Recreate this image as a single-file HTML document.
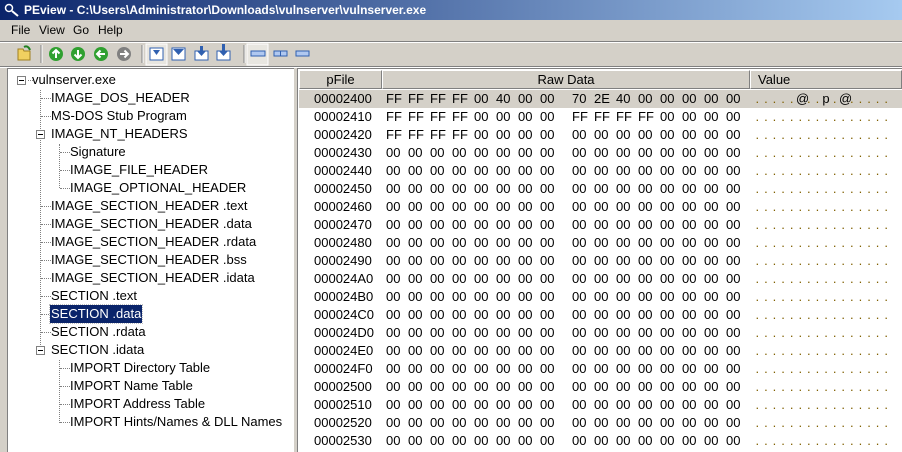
<!DOCTYPE html>
<html><head><style>
*{margin:0;padding:0;box-sizing:border-box}
body{width:902px;height:452px;background:#d4d0c8;font-family:"Liberation Sans",Arial,sans-serif;font-size:13px;position:relative;overflow:hidden;color:#000}
.title{position:absolute;left:0;top:0;width:902px;height:20px;background:linear-gradient(90deg,#0a246a,#a6caf0);color:#fff;font-weight:bold;font-size:12px;line-height:20px;padding-left:24px}
.menu{position:absolute;top:21px;left:0;height:19px;line-height:19px;font-size:12px}
.menu span{position:absolute}
.hl{position:absolute;left:0;width:902px;height:1px}
.left{position:absolute;left:7px;top:68px;width:287px;height:384px;background:#fff;border-left:1px solid #808080;border-top:1px solid #808080}
.right{position:absolute;left:297px;top:68px;width:605px;height:384px;background:#fff;border-left:1px solid #808080;border-top:1px solid #808080}
.t{position:absolute;white-space:nowrap;height:18px;line-height:18px}
.hdr{position:absolute;top:1px;height:19px;background:#d4d0c8;border-right:1px solid #808080;border-bottom:1px solid #808080;border-left:1px solid #fff;border-top:1px solid #fff;text-align:center;line-height:17px;font-size:13px}
.row{position:absolute;left:1px;width:604px;height:18px;line-height:18px}
.row .a{position:absolute;left:15px;color:#000}
.row .h{position:absolute;left:87px;color:#000;white-space:nowrap}
.row .h i{font-style:normal;display:inline-block;width:22px}
.row .h i.g{margin-left:10px}
.row .v{position:absolute;left:454px;white-space:nowrap;color:#806000}
.row .v i{font-style:normal;display:inline-block;width:8.6px;text-align:center}
.dv{position:absolute;border-left:1px dotted #808080;width:0}
.dh{position:absolute;border-top:1px dotted #808080;height:0}
.bx{position:absolute;width:9px;height:9px;border:1px solid #808080;background:#fff}
.bx:after{content:"";position:absolute;left:1px;top:3px;width:5px;height:1px;background:#000}
.ic{position:absolute;top:46px;width:14px;height:14px;border-radius:50%}
</style></head><body>
<div class="title">PEview - C:\Users\Administrator\Downloads\vulnserver\vulnserver.exe</div>
<svg style="position:absolute;left:4px;top:3px" width="16" height="14"><circle cx="5" cy="5" r="3.5" fill="none" stroke="#fff" stroke-width="1.5"/><line x1="8" y1="8" x2="14" y2="13" stroke="#fff" stroke-width="2"/></svg>
<div class="menu"><span style="left:11px">File</span><span style="left:39px">View</span><span style="left:73px">Go</span><span style="left:98px">Help</span></div>
<div class="hl" style="top:41px;background:#808080"></div><div class="hl" style="top:42px;background:#fff"></div>
<svg style="position:absolute;left:0;top:43px" width="320" height="24">
<path d="M18 6h5l1 2h6v9H18z" fill="#f0d060" stroke="#a08020"/><path d="M24 4q4-2 6 3" stroke="#208020" stroke-width="2" fill="none"/>
<line x1="41" y1="2" x2="41" y2="20" stroke="#808080"/><line x1="42" y1="2" x2="42" y2="20" stroke="#fff"/>
<circle cx="56" cy="11" r="7" fill="#30a030"/><path d="M56 15V7M52.5 10.5L56 7l3.5 3.5" stroke="#fff" stroke-width="2" fill="none"/>
<circle cx="78" cy="11" r="7" fill="#30a030"/><path d="M78 7v8M74.5 11.5L78 15l3.5-3.5" stroke="#fff" stroke-width="2" fill="none"/>
<circle cx="101" cy="11" r="7" fill="#30a030"/><path d="M105 11h-8M100.5 7.5L97 11l3.5 3.5" stroke="#fff" stroke-width="2" fill="none"/>
<circle cx="124" cy="11" r="7" fill="#808080"/><path d="M120 11h8M124.5 7.5L128 11l-3.5 3.5" stroke="#fff" stroke-width="2" fill="none"/>
<line x1="142" y1="2" x2="142" y2="20" stroke="#808080"/><line x1="143" y1="2" x2="143" y2="20" stroke="#fff"/>
<rect x="146" y="1" width="21" height="21" fill="#e8e6e0" stroke="#fff"/>
<rect x="150" y="5" width="13" height="12" fill="#fff" stroke="#3060b0"/><path d="M153 7h7l-3.5 5z" fill="#3060b0"/>
<rect x="172" y="5" width="13" height="12" fill="#fff" stroke="#3060b0"/><path d="M173 6h11l-5.5 6z" fill="#3060b0"/>
<rect x="195" y="8" width="13" height="9" fill="#fff" stroke="#3060b0"/><path d="M200 3h3v5h3l-4.5 5-4.5-5h3z" fill="#3060b0"/>
<rect x="217" y="8" width="13" height="9" fill="#fff" stroke="#3060b0"/><path d="M222 1h3v7h3l-4.5 5-4.5-5h3z" fill="#3060b0"/>
<line x1="244" y1="2" x2="244" y2="20" stroke="#808080"/><line x1="245" y1="2" x2="245" y2="20" stroke="#fff"/>
<rect x="247" y="1" width="21" height="21" fill="#e8e6e0" stroke="#fff"/>
<rect x="251" y="8" width="14" height="5" fill="#b0c8f0" stroke="#3060b0"/>
<rect x="274" y="8" width="13" height="5" fill="#b0c8f0" stroke="#3060b0"/><line x1="280.5" y1="8" x2="280.5" y2="13" stroke="#3060b0"/>
<rect x="296" y="8" width="13" height="5" fill="#b0c8f0" stroke="#3060b0"/>
</svg>
<div class="hl" style="top:66px;background:#808080"></div><div class="hl" style="top:67px;background:#fff"></div>

<div class="left">
<div class="dv" style="left:32px;top:21px;height:261px"></div>
<div class="dv" style="left:51px;top:75px;height:44px"></div>
<div class="dv" style="left:51px;top:291px;height:63px"></div>
<div class="dh" style="left:20px;top:11px;width:5px"></div>
<div class="dh" style="left:33px;top:29px;width:10px"></div>
<div class="dh" style="left:33px;top:47px;width:10px"></div>
<div class="dh" style="left:52px;top:83px;width:10px"></div>
<div class="dh" style="left:52px;top:101px;width:10px"></div>
<div class="dh" style="left:52px;top:119px;width:10px"></div>
<div class="dh" style="left:33px;top:137px;width:10px"></div>
<div class="dh" style="left:33px;top:155px;width:10px"></div>
<div class="dh" style="left:33px;top:173px;width:10px"></div>
<div class="dh" style="left:33px;top:191px;width:10px"></div>
<div class="dh" style="left:33px;top:209px;width:10px"></div>
<div class="dh" style="left:33px;top:227px;width:10px"></div>
<div class="dh" style="left:33px;top:245px;width:10px"></div>
<div class="dh" style="left:33px;top:263px;width:10px"></div>
<div class="dh" style="left:52px;top:299px;width:10px"></div>
<div class="dh" style="left:52px;top:317px;width:10px"></div>
<div class="dh" style="left:52px;top:335px;width:10px"></div>
<div class="dh" style="left:52px;top:353px;width:10px"></div>
<div class="bx" style="left:9px;top:7px"></div>
<div class="bx" style="left:28px;top:61px"></div>
<div class="bx" style="left:28px;top:277px"></div>
<div class="t" style="left:24px;top:2px">vulnserver.exe</div>
<div class="t" style="left:43px;top:20px">IMAGE_DOS_HEADER</div>
<div class="t" style="left:43px;top:38px">MS-DOS Stub Program</div>
<div class="t" style="left:43px;top:56px">IMAGE_NT_HEADERS</div>
<div class="t" style="left:62px;top:74px">Signature</div>
<div class="t" style="left:62px;top:92px">IMAGE_FILE_HEADER</div>
<div class="t" style="left:62px;top:110px">IMAGE_OPTIONAL_HEADER</div>
<div class="t" style="left:43px;top:128px">IMAGE_SECTION_HEADER .text</div>
<div class="t" style="left:43px;top:146px">IMAGE_SECTION_HEADER .data</div>
<div class="t" style="left:43px;top:164px">IMAGE_SECTION_HEADER .rdata</div>
<div class="t" style="left:43px;top:182px">IMAGE_SECTION_HEADER .bss</div>
<div class="t" style="left:43px;top:200px">IMAGE_SECTION_HEADER .idata</div>
<div class="t" style="left:43px;top:218px">SECTION .text</div>
<div class="t" style="left:42px;top:236px;background:#0a246a;color:#fff;padding:0 1px;outline:1px dotted #c0c0c0">SECTION .data</div>
<div class="t" style="left:43px;top:254px">SECTION .rdata</div>
<div class="t" style="left:43px;top:272px">SECTION .idata</div>
<div class="t" style="left:62px;top:290px">IMPORT Directory Table</div>
<div class="t" style="left:62px;top:308px">IMPORT Name Table</div>
<div class="t" style="left:62px;top:326px">IMPORT Address Table</div>
<div class="t" style="left:62px;top:344px">IMPORT Hints/Names &amp; DLL Names</div>
</div>

<div class="right">
<div class="hdr" style="left:1px;width:83px">pFile</div>
<div class="hdr" style="left:84px;width:368px">Raw Data</div>
<div class="hdr" style="left:452px;width:152px;text-align:left;padding-left:7px">Value</div>
<div class="row" style="top:21px;background:#d4d0c8"><span class="a">00002400</span><span class="h"><i>FF</i><i>FF</i><i>FF</i><i>FF</i><i>00</i><i>40</i><i>00</i><i>00</i><i class="g">70</i><i>2E</i><i>40</i><i>00</i><i>00</i><i>00</i><i>00</i><i>00</i></span><span class="v"><i>.</i><i>.</i><i>.</i><i>.</i><i>.</i><i style="color:#000">@</i><i>.</i><i>.</i><i style="color:#000">p</i><i>.</i><i style="color:#000">@</i><i>.</i><i>.</i><i>.</i><i>.</i><i>.</i></span></div>
<div class="row" style="top:39px"><span class="a">00002410</span><span class="h"><i>FF</i><i>FF</i><i>FF</i><i>FF</i><i>00</i><i>00</i><i>00</i><i>00</i><i class="g">FF</i><i>FF</i><i>FF</i><i>FF</i><i>00</i><i>00</i><i>00</i><i>00</i></span><span class="v"><i>.</i><i>.</i><i>.</i><i>.</i><i>.</i><i>.</i><i>.</i><i>.</i><i>.</i><i>.</i><i>.</i><i>.</i><i>.</i><i>.</i><i>.</i><i>.</i></span></div>
<div class="row" style="top:57px"><span class="a">00002420</span><span class="h"><i>FF</i><i>FF</i><i>FF</i><i>FF</i><i>00</i><i>00</i><i>00</i><i>00</i><i class="g">00</i><i>00</i><i>00</i><i>00</i><i>00</i><i>00</i><i>00</i><i>00</i></span><span class="v"><i>.</i><i>.</i><i>.</i><i>.</i><i>.</i><i>.</i><i>.</i><i>.</i><i>.</i><i>.</i><i>.</i><i>.</i><i>.</i><i>.</i><i>.</i><i>.</i></span></div>
<div class="row" style="top:75px"><span class="a">00002430</span><span class="h"><i>00</i><i>00</i><i>00</i><i>00</i><i>00</i><i>00</i><i>00</i><i>00</i><i class="g">00</i><i>00</i><i>00</i><i>00</i><i>00</i><i>00</i><i>00</i><i>00</i></span><span class="v"><i>.</i><i>.</i><i>.</i><i>.</i><i>.</i><i>.</i><i>.</i><i>.</i><i>.</i><i>.</i><i>.</i><i>.</i><i>.</i><i>.</i><i>.</i><i>.</i></span></div>
<div class="row" style="top:93px"><span class="a">00002440</span><span class="h"><i>00</i><i>00</i><i>00</i><i>00</i><i>00</i><i>00</i><i>00</i><i>00</i><i class="g">00</i><i>00</i><i>00</i><i>00</i><i>00</i><i>00</i><i>00</i><i>00</i></span><span class="v"><i>.</i><i>.</i><i>.</i><i>.</i><i>.</i><i>.</i><i>.</i><i>.</i><i>.</i><i>.</i><i>.</i><i>.</i><i>.</i><i>.</i><i>.</i><i>.</i></span></div>
<div class="row" style="top:111px"><span class="a">00002450</span><span class="h"><i>00</i><i>00</i><i>00</i><i>00</i><i>00</i><i>00</i><i>00</i><i>00</i><i class="g">00</i><i>00</i><i>00</i><i>00</i><i>00</i><i>00</i><i>00</i><i>00</i></span><span class="v"><i>.</i><i>.</i><i>.</i><i>.</i><i>.</i><i>.</i><i>.</i><i>.</i><i>.</i><i>.</i><i>.</i><i>.</i><i>.</i><i>.</i><i>.</i><i>.</i></span></div>
<div class="row" style="top:129px"><span class="a">00002460</span><span class="h"><i>00</i><i>00</i><i>00</i><i>00</i><i>00</i><i>00</i><i>00</i><i>00</i><i class="g">00</i><i>00</i><i>00</i><i>00</i><i>00</i><i>00</i><i>00</i><i>00</i></span><span class="v"><i>.</i><i>.</i><i>.</i><i>.</i><i>.</i><i>.</i><i>.</i><i>.</i><i>.</i><i>.</i><i>.</i><i>.</i><i>.</i><i>.</i><i>.</i><i>.</i></span></div>
<div class="row" style="top:147px"><span class="a">00002470</span><span class="h"><i>00</i><i>00</i><i>00</i><i>00</i><i>00</i><i>00</i><i>00</i><i>00</i><i class="g">00</i><i>00</i><i>00</i><i>00</i><i>00</i><i>00</i><i>00</i><i>00</i></span><span class="v"><i>.</i><i>.</i><i>.</i><i>.</i><i>.</i><i>.</i><i>.</i><i>.</i><i>.</i><i>.</i><i>.</i><i>.</i><i>.</i><i>.</i><i>.</i><i>.</i></span></div>
<div class="row" style="top:165px"><span class="a">00002480</span><span class="h"><i>00</i><i>00</i><i>00</i><i>00</i><i>00</i><i>00</i><i>00</i><i>00</i><i class="g">00</i><i>00</i><i>00</i><i>00</i><i>00</i><i>00</i><i>00</i><i>00</i></span><span class="v"><i>.</i><i>.</i><i>.</i><i>.</i><i>.</i><i>.</i><i>.</i><i>.</i><i>.</i><i>.</i><i>.</i><i>.</i><i>.</i><i>.</i><i>.</i><i>.</i></span></div>
<div class="row" style="top:183px"><span class="a">00002490</span><span class="h"><i>00</i><i>00</i><i>00</i><i>00</i><i>00</i><i>00</i><i>00</i><i>00</i><i class="g">00</i><i>00</i><i>00</i><i>00</i><i>00</i><i>00</i><i>00</i><i>00</i></span><span class="v"><i>.</i><i>.</i><i>.</i><i>.</i><i>.</i><i>.</i><i>.</i><i>.</i><i>.</i><i>.</i><i>.</i><i>.</i><i>.</i><i>.</i><i>.</i><i>.</i></span></div>
<div class="row" style="top:201px"><span class="a">000024A0</span><span class="h"><i>00</i><i>00</i><i>00</i><i>00</i><i>00</i><i>00</i><i>00</i><i>00</i><i class="g">00</i><i>00</i><i>00</i><i>00</i><i>00</i><i>00</i><i>00</i><i>00</i></span><span class="v"><i>.</i><i>.</i><i>.</i><i>.</i><i>.</i><i>.</i><i>.</i><i>.</i><i>.</i><i>.</i><i>.</i><i>.</i><i>.</i><i>.</i><i>.</i><i>.</i></span></div>
<div class="row" style="top:219px"><span class="a">000024B0</span><span class="h"><i>00</i><i>00</i><i>00</i><i>00</i><i>00</i><i>00</i><i>00</i><i>00</i><i class="g">00</i><i>00</i><i>00</i><i>00</i><i>00</i><i>00</i><i>00</i><i>00</i></span><span class="v"><i>.</i><i>.</i><i>.</i><i>.</i><i>.</i><i>.</i><i>.</i><i>.</i><i>.</i><i>.</i><i>.</i><i>.</i><i>.</i><i>.</i><i>.</i><i>.</i></span></div>
<div class="row" style="top:237px"><span class="a">000024C0</span><span class="h"><i>00</i><i>00</i><i>00</i><i>00</i><i>00</i><i>00</i><i>00</i><i>00</i><i class="g">00</i><i>00</i><i>00</i><i>00</i><i>00</i><i>00</i><i>00</i><i>00</i></span><span class="v"><i>.</i><i>.</i><i>.</i><i>.</i><i>.</i><i>.</i><i>.</i><i>.</i><i>.</i><i>.</i><i>.</i><i>.</i><i>.</i><i>.</i><i>.</i><i>.</i></span></div>
<div class="row" style="top:255px"><span class="a">000024D0</span><span class="h"><i>00</i><i>00</i><i>00</i><i>00</i><i>00</i><i>00</i><i>00</i><i>00</i><i class="g">00</i><i>00</i><i>00</i><i>00</i><i>00</i><i>00</i><i>00</i><i>00</i></span><span class="v"><i>.</i><i>.</i><i>.</i><i>.</i><i>.</i><i>.</i><i>.</i><i>.</i><i>.</i><i>.</i><i>.</i><i>.</i><i>.</i><i>.</i><i>.</i><i>.</i></span></div>
<div class="row" style="top:273px"><span class="a">000024E0</span><span class="h"><i>00</i><i>00</i><i>00</i><i>00</i><i>00</i><i>00</i><i>00</i><i>00</i><i class="g">00</i><i>00</i><i>00</i><i>00</i><i>00</i><i>00</i><i>00</i><i>00</i></span><span class="v"><i>.</i><i>.</i><i>.</i><i>.</i><i>.</i><i>.</i><i>.</i><i>.</i><i>.</i><i>.</i><i>.</i><i>.</i><i>.</i><i>.</i><i>.</i><i>.</i></span></div>
<div class="row" style="top:291px"><span class="a">000024F0</span><span class="h"><i>00</i><i>00</i><i>00</i><i>00</i><i>00</i><i>00</i><i>00</i><i>00</i><i class="g">00</i><i>00</i><i>00</i><i>00</i><i>00</i><i>00</i><i>00</i><i>00</i></span><span class="v"><i>.</i><i>.</i><i>.</i><i>.</i><i>.</i><i>.</i><i>.</i><i>.</i><i>.</i><i>.</i><i>.</i><i>.</i><i>.</i><i>.</i><i>.</i><i>.</i></span></div>
<div class="row" style="top:309px"><span class="a">00002500</span><span class="h"><i>00</i><i>00</i><i>00</i><i>00</i><i>00</i><i>00</i><i>00</i><i>00</i><i class="g">00</i><i>00</i><i>00</i><i>00</i><i>00</i><i>00</i><i>00</i><i>00</i></span><span class="v"><i>.</i><i>.</i><i>.</i><i>.</i><i>.</i><i>.</i><i>.</i><i>.</i><i>.</i><i>.</i><i>.</i><i>.</i><i>.</i><i>.</i><i>.</i><i>.</i></span></div>
<div class="row" style="top:327px"><span class="a">00002510</span><span class="h"><i>00</i><i>00</i><i>00</i><i>00</i><i>00</i><i>00</i><i>00</i><i>00</i><i class="g">00</i><i>00</i><i>00</i><i>00</i><i>00</i><i>00</i><i>00</i><i>00</i></span><span class="v"><i>.</i><i>.</i><i>.</i><i>.</i><i>.</i><i>.</i><i>.</i><i>.</i><i>.</i><i>.</i><i>.</i><i>.</i><i>.</i><i>.</i><i>.</i><i>.</i></span></div>
<div class="row" style="top:345px"><span class="a">00002520</span><span class="h"><i>00</i><i>00</i><i>00</i><i>00</i><i>00</i><i>00</i><i>00</i><i>00</i><i class="g">00</i><i>00</i><i>00</i><i>00</i><i>00</i><i>00</i><i>00</i><i>00</i></span><span class="v"><i>.</i><i>.</i><i>.</i><i>.</i><i>.</i><i>.</i><i>.</i><i>.</i><i>.</i><i>.</i><i>.</i><i>.</i><i>.</i><i>.</i><i>.</i><i>.</i></span></div>
<div class="row" style="top:363px"><span class="a">00002530</span><span class="h"><i>00</i><i>00</i><i>00</i><i>00</i><i>00</i><i>00</i><i>00</i><i>00</i><i class="g">00</i><i>00</i><i>00</i><i>00</i><i>00</i><i>00</i><i>00</i><i>00</i></span><span class="v"><i>.</i><i>.</i><i>.</i><i>.</i><i>.</i><i>.</i><i>.</i><i>.</i><i>.</i><i>.</i><i>.</i><i>.</i><i>.</i><i>.</i><i>.</i><i>.</i></span></div>
</div>
</body></html>
